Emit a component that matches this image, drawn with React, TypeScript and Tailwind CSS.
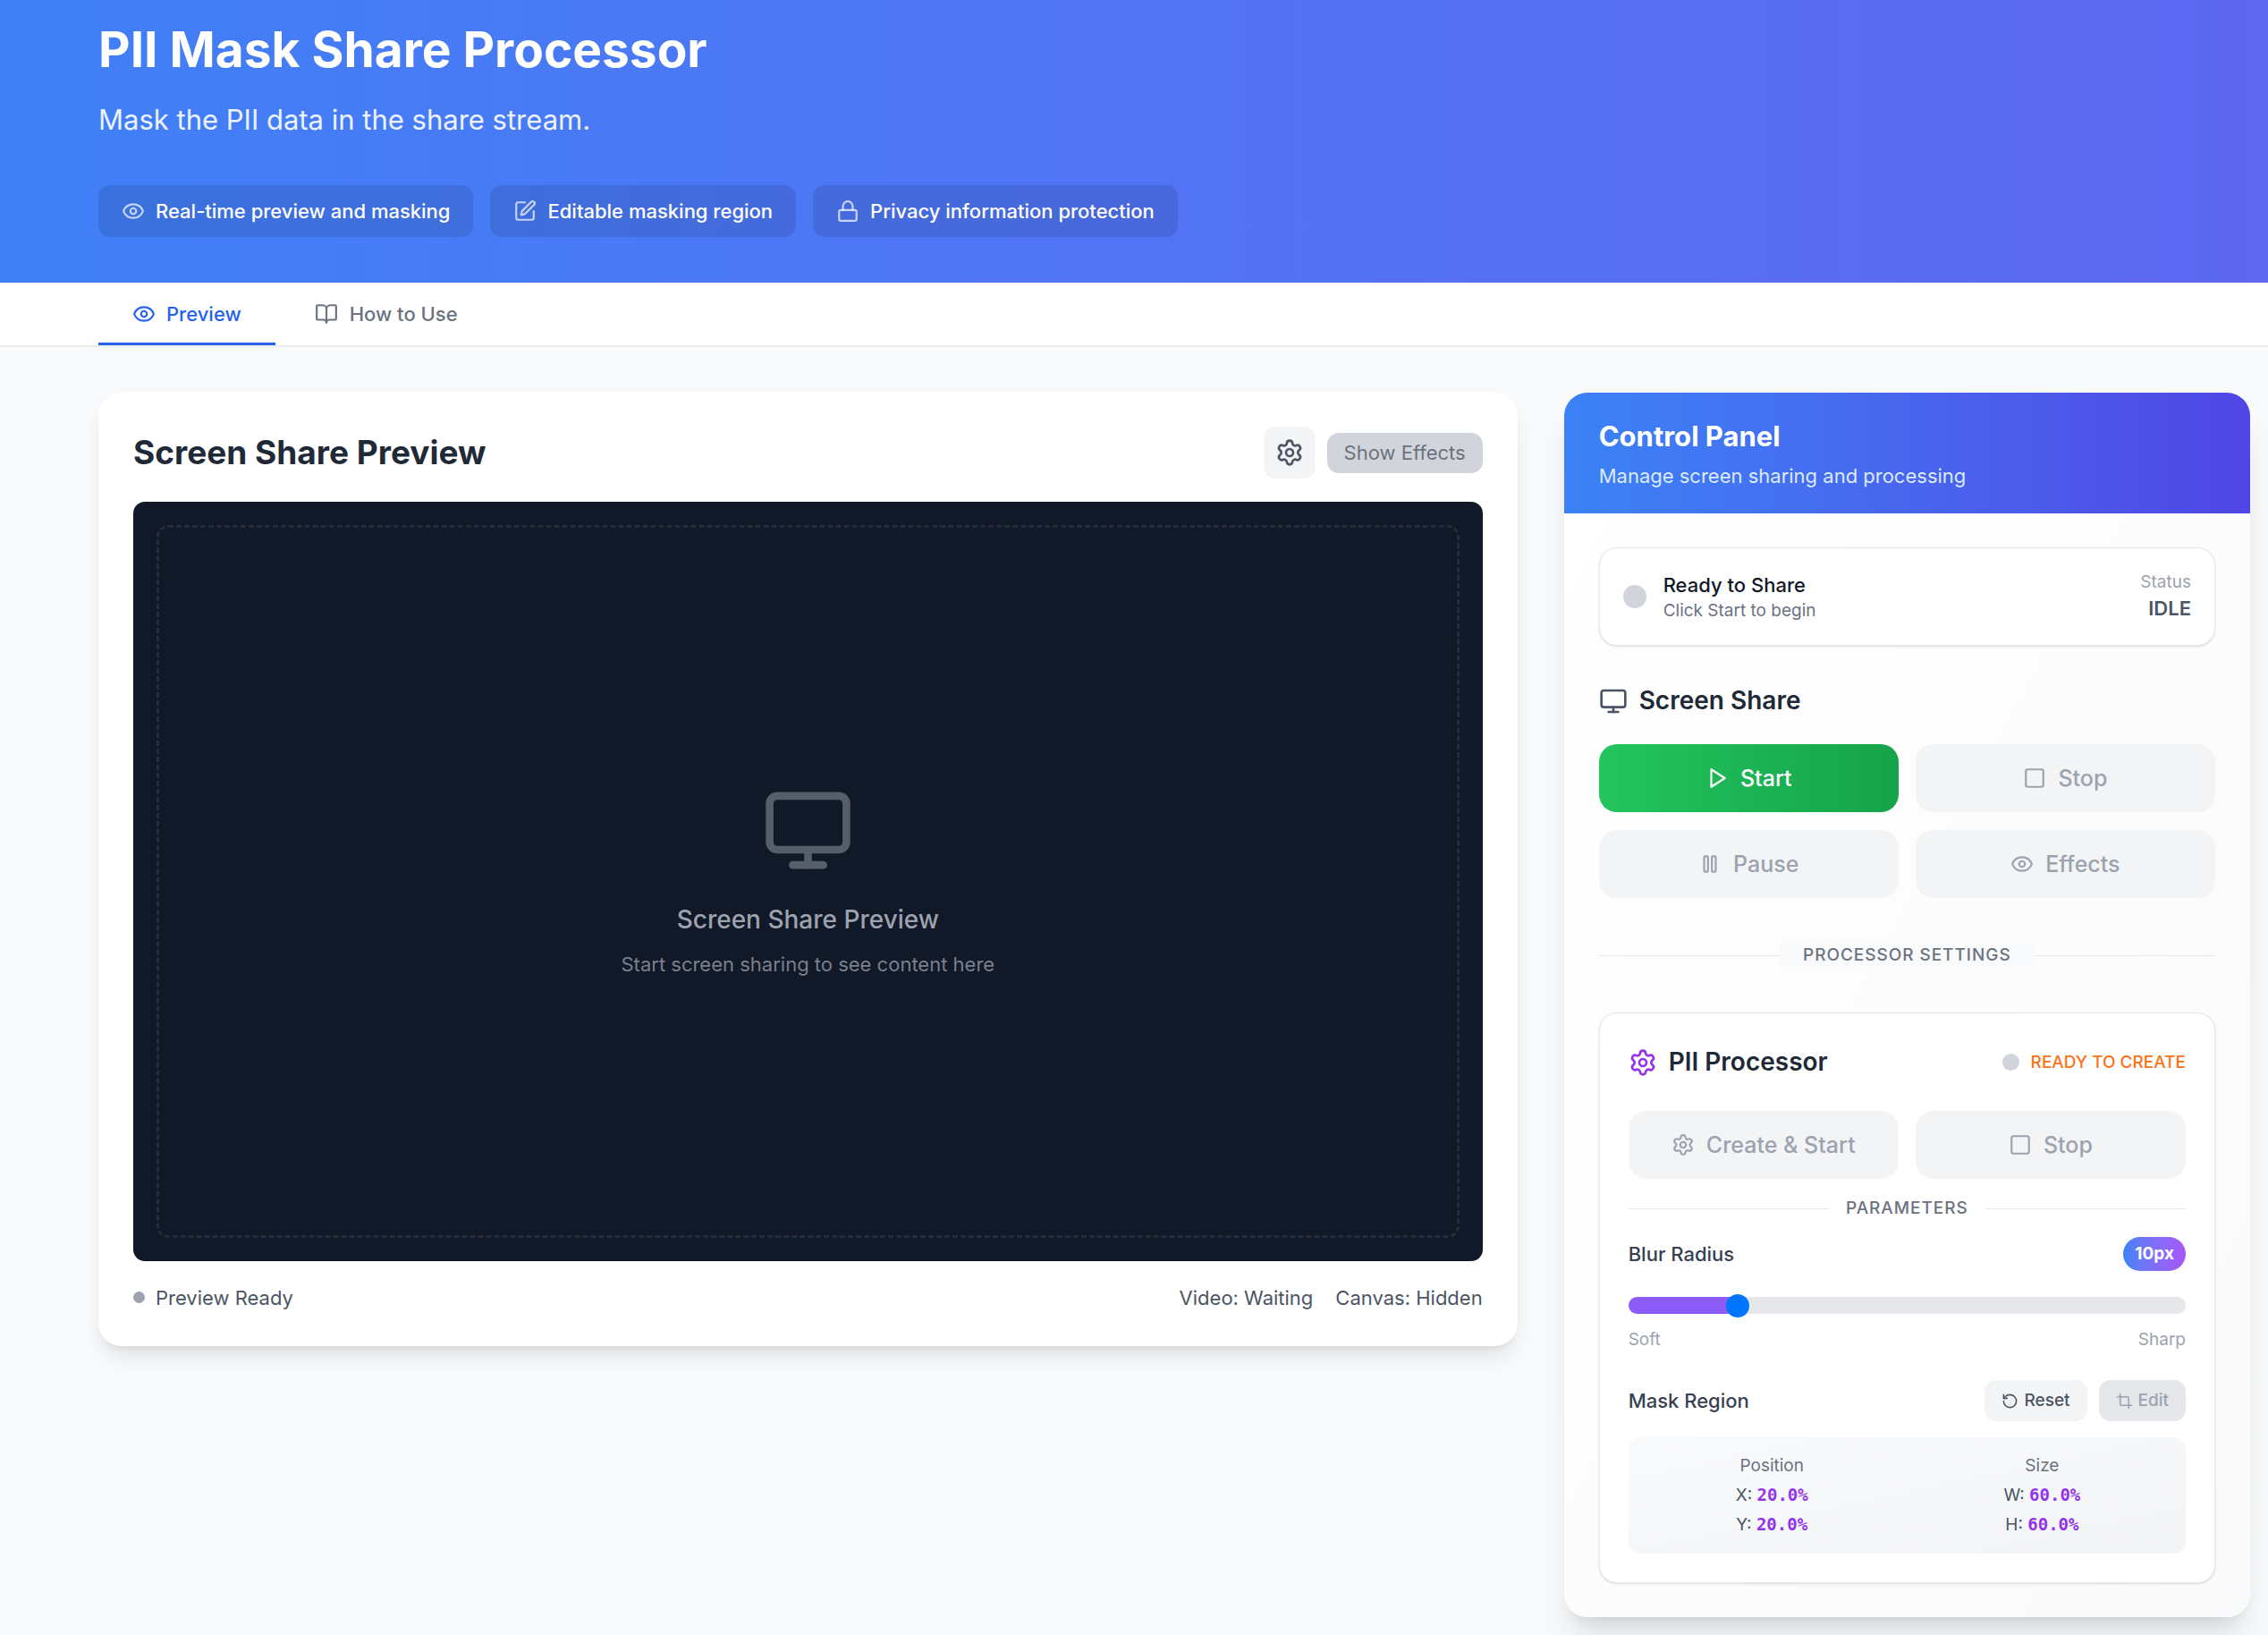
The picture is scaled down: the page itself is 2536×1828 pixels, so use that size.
import React, { useState } from "react";
import {
  BookOpen,
  Crop,
  Eye,
  Lock,
  Monitor,
  RotateCcw,
  Settings,
  Square,
  SquarePen,
} from "lucide-react";

type Icon = React.ComponentType<{ className?: string }>;

const Play: Icon = ({ className }) => (
  <svg
    viewBox="0 0 24 24"
    fill="none"
    stroke="currentColor"
    strokeWidth="2"
    strokeLinecap="round"
    strokeLinejoin="round"
    className={className}
    aria-hidden="true"
  >
    <polygon points="6 3 20 12 6 21 6 3" />
  </svg>
);

const Pause: Icon = ({ className }) => (
  <svg
    viewBox="0 0 24 24"
    fill="none"
    stroke="currentColor"
    strokeWidth="2"
    strokeLinecap="round"
    strokeLinejoin="round"
    className={className}
    aria-hidden="true"
  >
    <rect x="14" y="4" width="4" height="16" rx="1" />
    <rect x="6" y="4" width="4" height="16" rx="1" />
  </svg>
);

const features: { icon: Icon; label: string }[] = [
  { icon: Eye, label: "Real-time preview and masking" },
  { icon: SquarePen, label: "Editable masking region" },
  { icon: Lock, label: "Privacy information protection" },
];

function Hero() {
  return (
    <header className="bg-linear-to-r from-[#3f80f7] to-[#5d67f1] pt-[19px] pr-[20px] pb-[51px] pl-[110px] text-white">
      <h1 className="text-[55px] leading-[72px] font-bold">PII Mask Share Processor</h1>
      <p className="mt-[20px] text-[31px] leading-[46px] text-white/90">
        Mask the PII data in the share stream.
      </p>
      <ul className="mt-[50px] flex flex-wrap gap-[19px]">
        {features.map(({ icon: Icon, label }) => (
          <li
            key={label}
            className="flex items-center gap-[12px] rounded-[13px] bg-black/10 px-[26px] py-[13px] text-[22px] leading-[32px] font-medium"
          >
            <Icon className="size-[26px] text-white/70" />
            {label}
          </li>
        ))}
      </ul>
    </header>
  );
}

function Tabs() {
  return (
    <nav className="flex gap-[6px] border-b border-[#e5e7eb] bg-white pl-[110px] text-[22px] leading-[32px] font-medium shadow-xs">
      <button
        type="button"
        className="flex items-center gap-[12px] border-b-[3px] border-[#2563eb] px-[38px] pt-[19px] pb-[16px] text-[#2563eb]"
      >
        <Eye className="size-[26px]" />
        Preview
      </button>
      <button
        type="button"
        className="flex items-center gap-[13px] border-b-[3px] border-transparent px-[38px] pt-[19px] pb-[16px] text-[#6b7280]"
      >
        <BookOpen className="size-[26px]" />
        How to Use
      </button>
    </nav>
  );
}

function PreviewCard() {
  return (
    <section className="col-span-2 self-start rounded-[26px] bg-white px-[39px] py-[38px] shadow-[0_16px_24px_-5px_rgb(0_0_0/0.1),0_6px_10px_-6px_rgb(0_0_0/0.1)]">
      <div className="flex items-center justify-between">
        <h2 className="text-[37px] leading-[52px] font-bold text-[#1f2937]">Screen Share Preview</h2>
        <div className="flex items-center gap-[13px]">
          <button
            type="button"
            aria-label="Settings"
            className="rounded-[13px] bg-[#f3f4f6] p-[13px] text-[#4b5563]"
          >
            <Settings className="size-[32px]" />
          </button>
          <button
            type="button"
            disabled
            className="rounded-[13px] bg-[#d1d5db] px-[19px] py-[6px] text-[22px] leading-[33px] text-[#6b7280]"
          >
            Show Effects
          </button>
        </div>
      </div>

      <div className="mt-[26px] flex aspect-video flex-col rounded-[13px] bg-[#111827] p-[26px]">
        <div className="flex flex-1 flex-col items-center justify-center rounded-[13px] border-[3px] border-dashed border-[#242c3b] text-[#9ca3af]">
          <Monitor className="size-[103px] opacity-50" />
          <p className="mt-[26px] text-[28px] leading-[45px] font-medium">Screen Share Preview</p>
          <p className="mt-[11px] text-[22px] leading-[32px] opacity-75">
            Start screen sharing to see content here
          </p>
        </div>
      </div>

      <div className="mt-[25px] flex items-center justify-between text-[22px] leading-[32px] text-[#4b5563]">
        <div className="flex items-center gap-[12px]">
          <span className="size-[13px] rounded-full bg-[#9ca3af]" />
          Preview Ready
        </div>
        <div className="flex gap-[25px]">
          <span>Video: Waiting</span>
          <span>Canvas: Hidden</span>
        </div>
      </div>
    </section>
  );
}

function ActionButton({
  icon: Icon,
  label,
  primary = false,
}: {
  icon: Icon;
  label: string;
  primary?: boolean;
}) {
  return (
    <button
      type="button"
      disabled={!primary}
      className={
        primary
          ? "flex items-center justify-center gap-[13px] rounded-[20px] bg-linear-to-r from-[#22c55e] to-[#16a34a] py-[19px] text-[25px] leading-[38px] font-medium text-white"
          : "flex items-center justify-center gap-[13px] rounded-[20px] bg-[#f3f4f6] py-[19px] text-[25px] leading-[38px] font-medium text-[#9ca3af]"
      }
    >
      <Icon className="size-[26px]" />
      {label}
    </button>
  );
}

function Coordinate({ name, value }: { name: string; value: string }) {
  return (
    <div className="text-[#4b5563]">
      {name}:{" "}
      <span className="font-['DejaVu_Sans_Mono',monospace] font-bold text-[#9333ea]">{value}</span>
    </div>
  );
}

function BlurSlider() {
  const [radius, setRadius] = useState(10);
  const fill = (radius / 50) * 100;
  return (
    <div className="mt-[19px]">
      <div className="flex items-center justify-between">
        <label htmlFor="blur" className="text-[22px] leading-[32px] font-medium text-[#374151]">
          Blur Radius
        </label>
        <span className="rounded-full bg-linear-to-r from-[#3b82f6] to-[#a855f7] px-[13px] py-[6px] text-[19px] leading-[26px] font-bold text-white">
          {radius}px
        </span>
      </div>
      <input
        id="blur"
        type="range"
        min={1}
        max={50}
        value={radius}
        onChange={(e) => setRadius(Number(e.target.value))}
        style={{ background: `linear-gradient(to right, #8b5cf6 ${fill}%, #e5e7eb ${fill}%)` }}
        className="mt-[29px] block h-[19px] w-full appearance-none rounded-[10px] [&::-webkit-slider-thumb]:size-[26px] [&::-webkit-slider-thumb]:appearance-none [&::-webkit-slider-thumb]:rounded-full [&::-webkit-slider-thumb]:bg-[#0075ff]"
      />
      <div className="mt-[16px] flex justify-between text-[19px] leading-[26px] text-[#9ca3af]">
        <span>Soft</span>
        <span>Sharp</span>
      </div>
    </div>
  );
}

function MaskRegion() {
  return (
    <div className="mt-[32px]">
      <div className="flex items-center justify-between">
        <h4 className="text-[22px] leading-[32px] font-medium text-[#374151]">Mask Region</h4>
        <div className="flex gap-[13px] text-[19px] leading-[26px] font-medium">
          <button
            type="button"
            className="flex items-center gap-[6px] rounded-[13px] bg-[#f3f4f6] px-[19px] py-[10px] text-[#4b5563]"
          >
            <RotateCcw className="size-[19px]" />
            Reset
          </button>
          <button
            type="button"
            disabled
            className="flex items-center gap-[6px] rounded-[13px] bg-[#e5e7eb] px-[19px] py-[10px] text-[#9ca3af]"
          >
            <Crop className="size-[19px]" />
            Edit
          </button>
        </div>
      </div>
      <div className="mt-[18px] grid grid-cols-2 gap-[19px] rounded-[13px] bg-linear-to-br from-[#f9fafb] to-[#f3f4f6] p-[19px] text-center text-[19px] leading-[26px]">
        <div className="flex flex-col gap-[6px]">
          <div className="text-[#6b7280]">Position</div>
          <Coordinate name="X" value="20.0%" />
          <Coordinate name="Y" value="20.0%" />
        </div>
        <div className="flex flex-col gap-[6px]">
          <div className="text-[#6b7280]">Size</div>
          <Coordinate name="W" value="60.0%" />
          <Coordinate name="H" value="60.0%" />
        </div>
      </div>
    </div>
  );
}

function ControlPanel() {
  return (
    <aside className="self-start overflow-hidden rounded-[26px] bg-linear-to-br from-white to-[#f9fafb] shadow-[0_32px_40px_-8px_rgb(0_0_0/0.1),0_13px_16px_-10px_rgb(0_0_0/0.1)]">
      <div className="bg-linear-to-r from-[#3b82f6] to-[#4f46e5] px-[39px] py-[26px]">
        <h2 className="text-[31px] leading-[45px] font-bold text-white">Control Panel</h2>
        <p className="mt-[6px] text-[22px] leading-[32px] text-[#dbeafe]">
          Manage screen sharing and processing
        </p>
      </div>

      <div className="px-[39px] py-[38px]">
        <div className="flex items-center gap-[19px] rounded-[20px] border border-[#e5e7eb] bg-white px-[26px] py-[25px] shadow-sm">
          <span className="size-[26px] rounded-full bg-[#d1d5db]" />
          <div>
            <div className="text-[22px] leading-[32px] font-medium text-[#111827]">
              Ready to Share
            </div>
            <div className="text-[19px] leading-[26px] text-[#6b7280]">Click Start to begin</div>
          </div>
          <div className="ml-auto text-right">
            <div className="text-[19px] leading-[26px] text-[#9ca3af]">Status</div>
            <div className="text-[22px] leading-[32px] font-semibold text-[#4b5563]">IDLE</div>
          </div>
        </div>

        <h3 className="mt-[39px] flex items-center gap-[13px] text-[28px] leading-[45px] font-semibold text-[#1f2937]">
          <Monitor className="size-[32px] text-[#4b5563]" />
          Screen Share
        </h3>
        <div className="mt-[26px] grid grid-cols-2 gap-x-[19px] gap-y-[20px]">
          <ActionButton icon={Play} label="Start" primary />
          <ActionButton icon={Square} label="Stop" />
          <ActionButton icon={Pause} label="Pause" />
          <ActionButton icon={Eye} label="Effects" />
        </div>

        <div className="my-[51px] flex items-center">
          <div className="h-px flex-1 bg-[#e5e7eb]" />
          <span className="bg-[#f9fafb] px-[26px] text-[19px] leading-[26px] font-medium tracking-wider text-[#6b7280]">
            PROCESSOR SETTINGS
          </span>
          <div className="h-px flex-1 bg-[#e5e7eb]" />
        </div>

        <section className="rounded-[20px] border border-[#e5e7eb] bg-white p-[32px] shadow-sm">
          <div className="flex items-center justify-between">
            <h3 className="flex items-center gap-[13px] text-[28px] leading-[45px] font-semibold text-[#1f2937]">
              <Settings className="size-[32px] text-[#9333ea]" />
              PII Processor
            </h3>
            <div className="flex items-center gap-[13px] text-[19px] leading-[26px] font-medium text-[#f97316]">
              <span className="size-[19px] rounded-full bg-[#d1d5db]" />
              READY TO CREATE
            </div>
          </div>
          <div className="mt-[32px] grid grid-cols-2 gap-[19px]">
            <ActionButton icon={Settings} label="Create & Start" />
            <ActionButton icon={Square} label="Stop" />
          </div>
          <div className="mt-[20px] flex items-center gap-[19px]">
            <div className="h-px flex-1 bg-[#e5e7eb]" />
            <span className="text-[19px] leading-[26px] font-medium tracking-wider text-[#6b7280]">
              PARAMETERS
            </span>
            <div className="h-px flex-1 bg-[#e5e7eb]" />
          </div>
          <BlurSlider />
          <MaskRegion />
        </section>
      </div>
    </aside>
  );
}

export default function App() {
  return (
    <div className="min-h-screen bg-[#f8fafc] font-[Inter,sans-serif]">
      <Hero />
      <Tabs />
      <main className="grid grid-cols-3 gap-[52px] pt-[52px] pr-[20px] pb-[18px] pl-[110px]">
        <PreviewCard />
        <ControlPanel />
      </main>
    </div>
  );
}
